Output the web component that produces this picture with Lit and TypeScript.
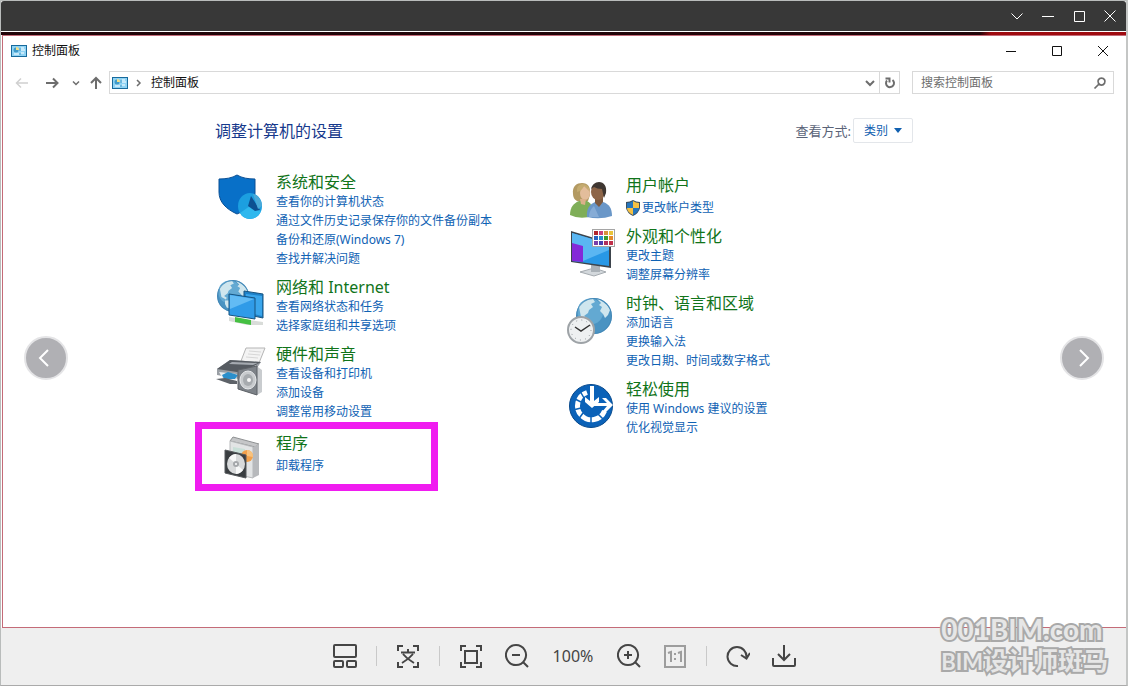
import { LitElement, html, css, svg, nothing } from "lit";
import { customElement } from "lit/decorators.js";

const globe = (cx: number, cy: number, r: number) => svg`
  <circle cx=${cx} cy=${cy} r=${r} fill="#4a93c2"></circle>
  <circle cx=${cx - r * 0.2} cy=${cy - r * 0.25} r=${r * 0.72} fill="#63a9d2"></circle>
  <g transform="translate(${cx} ${cy}) scale(${r / 18})" fill="#cfe6ee">
    <path d="M-15-9C-12-14-6-17-1-17L1-14-3-12-1-9-5-6-6-3-10 0-7 2-8 4-13 1-14-4Z"></path>
    <path d="M3-17C9-15 14-11 16-6L14-1 11 2 9-2 6-5 8-9 5-11 7-13Z"></path>
    <path d="M-9 5-4 5-1 9-4 14-7 13-9 9Z"></path>
  </g>
  <circle cx=${cx} cy=${cy} r=${r - 0.5} fill="none" stroke="#3d7fae" opacity=".6"></circle>`;

const icons: Record<string, unknown> = {
  security: svg`
    <path d="M4 7C11 7 17 6 22 3C27 6 33 7 40 7V21C40 31 32 38 22 42C11 37 4 30 4 20Z" fill="#0870c8" stroke="#0a4f94"></path>
    <ellipse cx="35" cy="34" rx="12" ry="13" fill="#1c9fe0"></ellipse>
    <path d="M25 41A12 13 0 0 0 46 39L35 34Z" fill="#2fb8ee"></path>
    <path d="M36 24L45 38 40 39 33 34Z" fill="#0d4f91"></path>
    <path d="M38 22Q46 24 47 34L43 37Z" fill="#4aa9d8"></path>`,
  network: svg`
    ${globe(18, 19, 16)}
    <path d="M29 14L48 17V41L29 37Z" fill="#1e81c8" stroke="#17537f"></path>
    <path d="M31 17L47 19V39L31 35Z" fill="#3aa6ec"></path>
    <path d="M14 17L40 21V42L14 38Z" fill="#2f9be8" stroke="#17537f"></path>
    <path d="M15 18L39 22 15 32Z" fill="#62bbf4"></path>
    <path d="M14 40L48 45V48L32 48 14 44Z" fill="#d9dcd9"></path>
    <path d="M20 40L36 43V48L20 45Z" fill="#45c042"></path>`,
  hardware: svg`
    <path d="M31 4L50 4 44 19 26 17Z" fill="#f3f3f3" stroke="#b5b5b5"></path>
    <path d="M34 7L46 8M33 10L45 11M31 13L43 14" stroke="#d6d6d6"></path>
    <path d="M2 25L15 16 46 18 40 27 24 35 2 31Z" fill="#9a9fa5"></path>
    <path d="M2 25L15 16 46 18 37 23 22 28Z" fill="#565b61"></path>
    <path d="M17 18L43 19 38 21 14 20Z" fill="#a5aab0"></path>
    <path d="M4 28L22 30 21 37 8 35Z" fill="#e9edf0"></path>
    <path d="M7 31L13 28 23 31 20 35 9 35Z" fill="#2b8fcb"></path>
    <path d="M1 35L10 34 22 37 22 40 15 40Z" fill="#5d6268"></path>
    <path d="M40 21L47 26V48L42 51Z" fill="#c9cccf"></path>
    <path d="M23 26L42 22V51L23 45Z" fill="#7d8288" stroke="#5d6166"></path>
    <ellipse cx="33" cy="36" rx="8" ry="9" fill="#c8cbce" stroke="#e8eaec"></ellipse>
    <ellipse cx="33" cy="36" rx="5" ry="6" fill="#a7abaf"></ellipse>
    <circle cx="34" cy="36" r="2" fill="#f7f7f7"></circle>`,
  programs: svg`
    <path d="M15 8L18 4 44 11 40 14Z" fill="#c5c6c8" stroke="#8e9092"></path>
    <path d="M15 8L38 14V45L15 40Z" fill="#e2e4e5" stroke="#b7b9bb"></path>
    <path d="M38 14L44 11V42L38 45Z" fill="#b7b9bc"></path>
    <path d="M18 14L30 16V27L18 24Z" fill="#c9dfd8"></path>
    <circle cx="32" cy="23" r="6" fill="#f2a04a"></circle>
    <path d="M32 23V17A6 6 0 0 1 38 24Z" fill="#f8c27d"></path>
    <path d="M10 17L31 22V45L10 40Z" fill="#3a3e41" stroke="#55595c"></path>
    <ellipse cx="21" cy="31" rx="9" ry="10" fill="#d8dadb"></ellipse>
    <path d="M21 31L14 25Q17 21 21 21ZM21 31L28 37Q25 41 21 41Z" fill="#f7f8f8"></path>
    <circle cx="21" cy="31" r="3" fill="#a5a8ab"></circle>
    <circle cx="21" cy="31" r="1" fill="#fff"></circle>`,
  users: svg`
    <path d="M5 40C5 32 9 28 14 26L22 26C27 28 28 34 28 41Q15 45 5 40Z" fill="#7fae58"></path>
    <path d="M8 19C7 11 12 8 17 8C23 8 26 12 25 20L23 26H12Q8 24 8 19Z" fill="#b39a62"></path>
    <ellipse cx="20" cy="18" rx="5" ry="7" fill="#e3bd9b"></ellipse>
    <path d="M12 17Q17 16 19 11L24 16Q24 9 17 9Q11 10 12 17Z" fill="#c4ab70"></path>
    <path d="M15 24H21L20 30 16 29Z" fill="#dbb08a"></path>
    <path d="M22 42C21 34 25 29 30 27H38C44 29 47 33 47 41Q35 45 22 42Z" fill="#6a97c8"></path>
    <path d="M24 42C24 36 27 33 29 31L34 42Z" fill="#86acd6"></path>
    <path d="M30 22H38V27L34 32 30 28Z" fill="#7d5a40"></path>
    <ellipse cx="33" cy="17" rx="7" ry="8" fill="#8d6548"></ellipse>
    <path d="M26 14C27 10 30 7 34 7C39 7 42 11 41 18L39 23 37 14Q32 14 29 12Z" fill="#3f3732"></path>`,
  appearance: svg`
    <path d="M15 46L29 42 41 46 29 50Z" fill="#d3d8dc" stroke="#a5abb0"></path>
    <path d="M26 37L35 39V46H26Z" fill="#aab1b7"></path>
    <path d="M6 5L46 17V42L6 36Z" fill="#3c444c"></path>
    <path d="M7 7L44 18V40L7 35Z" fill="#2898e6"></path>
    <path d="M7 7L44 18V24L18 35 7 34Z" fill="#5ab6f2"></path>
    <path d="M7 17L18 20V36L7 35Z" fill="#8428d8"></path>
    <rect x="27.500" y="3.500" width="22" height="17" fill="#fff" stroke="#a5a5a5"></rect>
    ${[
      ["#b3262a", "#c8407e", "#d8923b", "#e9c33a"],
      ["#2964c0", "#268fd0", "#3c9b2f", "#e58a28"],
      ["#7a3fa8", "#4a3fb0", "#b0305c", "#c0304a"],
    ].map((row, y) =>
      row.map((fill, x) => svg`<rect x=${29 + x * 5} y=${5 + y * 5} width="4" height="4" fill=${fill}></rect>`),
    )}`,
  clock: svg`
    ${globe(29, 23, 18)}
    <circle cx="16" cy="37" r="13" fill="#eef0f1" stroke="#9ea3a7" stroke-width="2"></circle>
    <circle cx="16" cy="37" r="10" fill="none" stroke="#8f9497" stroke-dasharray="1 4.236"></circle>
    <path d="M10 34L16 38 25 32" fill="none" stroke="#333" stroke-width="1.500"></path>`,
  ease: svg`
    <circle cx="26" cy="27" r="21.500" fill="#0b62b8" stroke="#07498c"></circle>
    <path d="M22 13.500A14 14 0 1 0 39.500 32" fill="none" stroke="#fff" stroke-width="5"></path>
    <path d="M15 12L19 19M8 19L16 23M8 31L16 29M13 41L18 34M26 45L26 36M38 40L32 34" stroke="#0b62b8" stroke-width="1.500"></path>
    <path d="M25 7H29V22L34 18V23L27 29 20 23V18L25 22Z" fill="#fff"></path>
    <path d="M28 24H42L37 19H41L48 26 41 33H37L42 27H28Z" fill="#fff"></path>`,
};

interface Category {
  icon: string;
  title: string;
  links: string[];
  shield?: boolean;
  marked?: boolean;
}

const columns: Category[][] = [
  [
    {
      icon: "security",
      title: "系统和安全",
      links: ["查看你的计算机状态", "通过文件历史记录保存你的文件备份副本", "备份和还原(Windows 7)", "查找并解决问题"],
    },
    { icon: "network", title: "网络和 Internet", links: ["查看网络状态和任务", "选择家庭组和共享选项"] },
    { icon: "hardware", title: "硬件和声音", links: ["查看设备和打印机", "添加设备", "调整常用移动设置"] },
    { icon: "programs", title: "程序", links: ["卸载程序"], marked: true },
  ],
  [
    { icon: "users", title: "用户帐户", links: ["更改帐户类型"], shield: true },
    { icon: "appearance", title: "外观和个性化", links: ["更改主题", "调整屏幕分辨率"] },
    { icon: "clock", title: "时钟、语言和区域", links: ["添加语言", "更换输入法", "更改日期、时间或数字格式"] },
    { icon: "ease", title: "轻松使用", links: ["使用 Windows 建议的设置", "优化视觉显示"] },
  ],
];

@customElement("category-item")
class CategoryItem extends LitElement {
  static properties = { item: { attribute: false } };
  declare item: Category;

  static styles = css`
    :host { display: block; }
    .category { position: relative; display: grid; grid-template-columns: 50px 1fr; column-gap: 11px; }
    .single { padding-top: 3px; }
    .art { width: 50px; height: 40px; overflow: visible; }
    .title, .link { text-decoration: none; white-space: nowrap; }
    .title { display: block; margin: 0; font-size: 16px; font-weight: 400; line-height: 20px; color: #11741a; }
    .title a { color: inherit; text-decoration: none; }
    .links { margin: 0; padding: 0; list-style: none; }
    .single .links { padding-top: 3px; }
    .row { display: flex; align-items: center; height: 19px; }
    .link { font-size: 12px; line-height: 19px; color: #0f62b4; }
    .uac { width: 14px; height: 16px; margin-right: 2px; }
    .mark { position: absolute; top: -8px; left: -20px; width: 243px; height: 69px; box-sizing: border-box; border: 7px solid #f01cf0; pointer-events: none; }
  `;

  render() {
    const { icon, title, links, shield, marked } = this.item;
    return html`<section class="category ${links.length === 1 ? "single" : ""}">
      <svg class="art" viewBox="0 0 50 40" aria-hidden="true">${icons[icon]}</svg>
      <div>
        <h2 class="title"><a href="#">${title}</a></h2>
        <ul class="links">
          ${links.map(
            (text) => html`<li class="row">
              ${shield
                ? html`<svg class="uac" viewBox="0 0 14 16" aria-hidden="true">
                    <path d="M0 2Q4 2 7 0Q10 2 14 2V8Q13 13 7 16Q1 13 0 8Z" fill="#3a4f60"></path>
                    <path d="M1 3Q4 3 7 1V8H1Z" fill="#2676bd"></path>
                    <path d="M7 1Q10 3 13 3V8H7Z" fill="#f6c143"></path>
                    <path d="M1 8H7V15Q1 12 1 8Z" fill="#f6c143"></path>
                    <path d="M7 8H13Q13 12 7 15Z" fill="#2676bd"></path>
                  </svg>`
                : nothing}<a class="link" href="#">${text}</a>
            </li>`,
          )}
        </ul>
      </div>
      ${marked ? html`<div class="mark"></div>` : nothing}
    </section>`;
  }
}

const panelIcon = html`<svg class="panel-icon" viewBox="0 0 16 12" aria-hidden="true">
  <rect x=".5" y=".5" width="15" height="11" fill="#8fd3f4" stroke="#176a9c"></rect>
  <circle cx="5" cy="5" r="2.500" fill="#3f9ac9"></circle>
  <path d="M5 5V2A3 3 0 0 1 8 5Z" fill="#f3e08a"></path>
  <path d="M10 3H13M10 5H14M3 9H8M10 8H13" stroke="#fff"></path>
  <path d="M9 3V6M9 8V10" stroke="#4b9cc8"></path>
</svg>`;

const line = (d: string, size = 16, width = 1) => html`<svg
  width=${size} height=${size} viewBox="0 0 ${size} ${size}" fill="none" stroke="currentColor"
  stroke-width=${width} aria-hidden="true"><path d=${d}></path></svg>`;

const tool = (label: string, d: string, extra = "") => html`<button class="tool ${extra}" aria-label=${label}>
  <svg width="24" height="24" viewBox="0 0 24 24" fill="none" stroke="currentColor" stroke-width="2" aria-hidden="true"><path d=${d}></path></svg>
</button>`;

@customElement("app-root")
class AppRoot extends LitElement {
  static styles = css`
    :host { display: block; font-family: "Noto Sans", "Noto Sans CJK SC", sans-serif; color: #111; }
    * { box-sizing: border-box; }
    button { display: grid; place-items: center; padding: 0; border: 0; background: none; color: inherit; font: inherit; }
    svg { display: block; }
    .viewer { display: flex; flex-direction: column; min-height: 100vh; border: 1px solid #b9bcbb; border-right: 2px solid #c4c6c5; border-bottom-color: #aaa; background: #efefef; }
    .viewer-bar { display: flex; justify-content: flex-end; height: 30px; padding-right: 1px; border-radius: 3px 3px 0 0; background: #383838; color: #fff; }
    .viewer-bar button { width: 31px; height: 30px; }
    .stage { position: relative; flex: 1; display: flex; flex-direction: column; }
    .photo { flex: 1; display: flex; flex-direction: column; padding: 3px 0 0 1px; border-top: 1px solid #fff; background: linear-gradient(90deg, #210409 0 87%, #9f0b10 88%) top / 100% 3px no-repeat #fff; }
    .window { flex: 1; display: flex; flex-direction: column; border: solid #c46b78; border-width: 1px 0 1px 1px; background: #fff; }
    .window-bar { display: flex; align-items: center; height: 29px; padding-left: 8px; }
    .window-title { flex: 1; margin: 0 0 0 5px; font-size: 12px; font-weight: 400; line-height: 18px; }
    .window-bar button { width: 46px; height: 29px; }
    .panel-icon { width: 16px; height: 12px; flex: none; }
    .nav { display: flex; align-items: center; height: 23px; margin: 6px 12px 0 11px; color: #6d6d6d; }
    .back { width: 16px; color: #d0d0d0; }
    .forward { width: 16px; margin-left: 14px; }
    .recent { width: 16px; margin-left: 8px; }
    .up { width: 16px; margin-left: 4px; margin-right: 5px; }
    .address { flex: 1; display: flex; align-items: center; height: 23px; padding-left: 2px; border: 1px solid #d9d9d9; }
    .crumb { flex: 1; margin-left: 5px; font-size: 12px; line-height: 20px; color: #111; text-decoration: none; }
    .crumb-arrow { margin-left: 2px; }
    .address button { width: 18px; height: 21px; }
    .address .refresh { border-left: 1px solid #d9d9d9; width: 20px; }
    .search { display: flex; align-items: center; width: 202px; height: 23px; margin-left: 12px; padding: 0 5px 0 8px; border: 1px solid #d9d9d9; }
    .search input { flex: 1; min-width: 0; padding: 0; border: 0; outline: 0; background: none; font: inherit; font-size: 12px; line-height: 20px; }
    .search input::placeholder { color: #6d6d6d; opacity: 1; }
    .content { width: 100%; max-width: 699px; margin: 0 auto; padding: 24px 0; }
    .head { display: flex; align-items: center; justify-content: space-between; height: 25px; padding-right: 1px; }
    .heading { margin: 0; font-size: 16px; font-weight: 400; line-height: 24px; color: #16398c; }
    .view { display: flex; align-items: center; gap: 2px; font-size: 13px; color: #5a6378; }
    .pick { position: relative; }
    .pick select { appearance: none; display: block; width: 60px; height: 25px; padding: 0 0 0 10px; border: 1px solid #e3e6ea; border-radius: 2px; background: #fff; color: #1160b0; font: inherit; font-size: 12px; }
    .pick svg { position: absolute; right: 11px; top: 10px; pointer-events: none; }
    .columns { display: grid; grid-template-columns: 1fr 1fr; column-gap: 1px; margin-top: 29px; }
    .column { display: flex; flex-direction: column; gap: 9px; }
    .turn { position: absolute; top: 50%; width: 44px; height: 44px; margin-top: -22px; border: 2px solid #e4e4e6; border-radius: 50%; background: #b0b0b4; color: #fff; }
    .previous { left: 23px; }
    .next { right: 22px; }
    .toolbar { display: flex; align-items: center; justify-content: center; gap: 22px; height: 57px; padding: 0 0 2px 2px; color: #454545; }
    .tool { width: 24px; height: 24px; }
    .muted { color: #9d9d9d; }
    .divider { width: 1px; height: 20px; margin: 0 -3px; background: #c9c9c9; }
    .zoom { width: 44px; text-align: center; font-size: 16px; line-height: 24px; white-space: nowrap; }
    .watermark { position: absolute; right: 18px; bottom: 8px; margin: 0; font-family: "Lato", "Noto Sans CJK SC", sans-serif; font-size: 28px; font-weight: 700; line-height: 31px; color: #e6e6e6; -webkit-text-stroke: 4px #a9a9a9; stroke-linejoin: round; paint-order: stroke fill; pointer-events: none; }
    .watermark span { display: block; white-space: nowrap; }
    .watermark .team { font-size: 25px; }
    .watermark .latin { display: inline; font-size: 22px; }
  `;

  render() {
    return html`<main class="viewer">
      <header class="viewer-bar">
        <button aria-label="更多">${line("M2.500 5.500L8 11 13.500 5.500")}</button>
        <button aria-label="最小化">${line("M2 8.500H14")}</button>
        <button aria-label="最大化">${line("M3.500 3.500H13.500V13.500H3.500Z")}</button>
        <button aria-label="关闭">${line("M2.500 2.500L13.500 13.500M13.500 2.500L2.500 13.500")}</button>
      </header>
      <div class="stage">
        <div class="photo">
          <div class="window">
            <header class="window-bar">
              ${panelIcon}
              <h1 class="window-title">控制面板</h1>
              <button aria-label="最小化">${line("M3 8.500H13")}</button>
              <button aria-label="最大化">${line("M3.500 3.500H12.500V12.500H3.500Z")}</button>
              <button aria-label="关闭">${line("M3 3L13 13M13 3L3 13")}</button>
            </header>
            <nav class="nav">
              <button class="back" aria-label="后退">${line("M14 8H3M7 3.500L2.500 8 7 12.500", 16, 1.5)}</button>
              <button class="forward" aria-label="前进">${line("M2 8H13M9 3.500L13.500 8 9 12.500", 16, 2)}</button>
              <button class="recent" aria-label="最近">${line("M5 6.500L8 9.500 11 6.500", 16, 1.5)}</button>
              <button class="up" aria-label="向上">${line("M8 14V3M3 8L8 3 13 8", 16, 2)}</button>
              <div class="address">
                ${panelIcon}
                <span class="crumb-arrow">${line("M7 5L10 8 7 11", 16, 1.5)}</span>
                <a class="crumb" href="#">控制面板</a>
                <button aria-label="展开">${line("M4 6L8 10 12 6", 16, 2)}</button>
                <button class="refresh" aria-label="刷新">${line("M10.500 5A4 4 0 1 1 5 5.500M3.500 3.500H7.500V7.500", 16, 2)}</button>
              </div>
              <label class="search">
                <input type="search" placeholder="搜索控制面板" aria-label="搜索控制面板" />
                ${line("M9.500 3A3.500 3.500 0 1 1 9.490 3M7 9L2.500 13.500", 16, 1.75)}
              </label>
            </nav>
            <div class="content">
              <div class="head">
                <h2 class="heading">调整计算机的设置</h2>
                <div class="view">
                  <label for="view">查看方式:</label>
                  <span class="pick">
                    <select id="view"><option>类别</option></select>
                    <svg width="8" height="5" viewBox="0 0 8 5" aria-hidden="true"><path d="M0 0H8L4 5Z" fill="#1160b0"></path></svg>
                  </span>
                </div>
              </div>
              <div class="columns">
                ${columns.map(
                  (column) => html`<div class="column">
                    ${column.map((item) => html`<category-item .item=${item}></category-item>`)}
                  </div>`,
                )}
              </div>
            </div>
          </div>
        </div>
        <footer class="toolbar">
          ${tool("缩略图", "M2 1H22Q23 1 23 2V12Q23 13 22 13H2Q1 13 1 12V2Q1 1 2 1ZM2 17H9Q10 17 10 18V22Q10 23 9 23H2Q1 23 1 22V18Q1 17 2 17ZM15 17H22Q23 17 23 18V22Q23 23 22 23H15Q14 23 14 22V18Q14 17 15 17Z")}
          <span class="divider"></span>
          ${tool("翻译", "M2 7V2H7M17 2H22V7M22 18V23H17M7 23H2V18M12 5V8M5 8.500H19M7 10Q11 15 18 19M17 10Q13 15 6 19")}
          <span class="divider"></span>
          ${tool("适应窗口", "M2 7V2H7M17 2H22V7M22 18V23H17M7 23H2V18M6 7H18V19H6Z")}
          ${tool("缩小", "M11 1A10 10 0 1 1 10.990 1M7 11H15M18 18L23 23")}
          <output class="zoom">100%</output>
          ${tool("放大", "M11 1A10 10 0 1 1 10.990 1M7 11H15M11 7V15M18 18L23 23")}
          ${tool("原始大小", "M2 2H22V23H2ZM5 9L8 8V18M15 9L18 8V18M12 9V11M12 14V16", "muted")}
          <span class="divider"></span>
          ${tool("旋转", "M12 22A9.500 9.500 0 1 1 20.500 13M15 11L20.500 14.500 24 9")}
          ${tool("下载", "M12 1V15M6 10L12 16 18 10M1 14V21Q1 22 2 22H22Q23 22 23 21V14")}
        </footer>
        <button class="turn previous" aria-label="上一张">${line("M14 4L6 12 14 20", 24, 2)}</button>
        <button class="turn next" aria-label="下一张">${line("M10 4L18 12 10 20", 24, 2)}</button>
        <p class="watermark"><span>001BIM.com</span><span class="team"><span class="latin">BIM</span>设计师斑马</span></p>
      </div>
    </main>`;
  }
}
